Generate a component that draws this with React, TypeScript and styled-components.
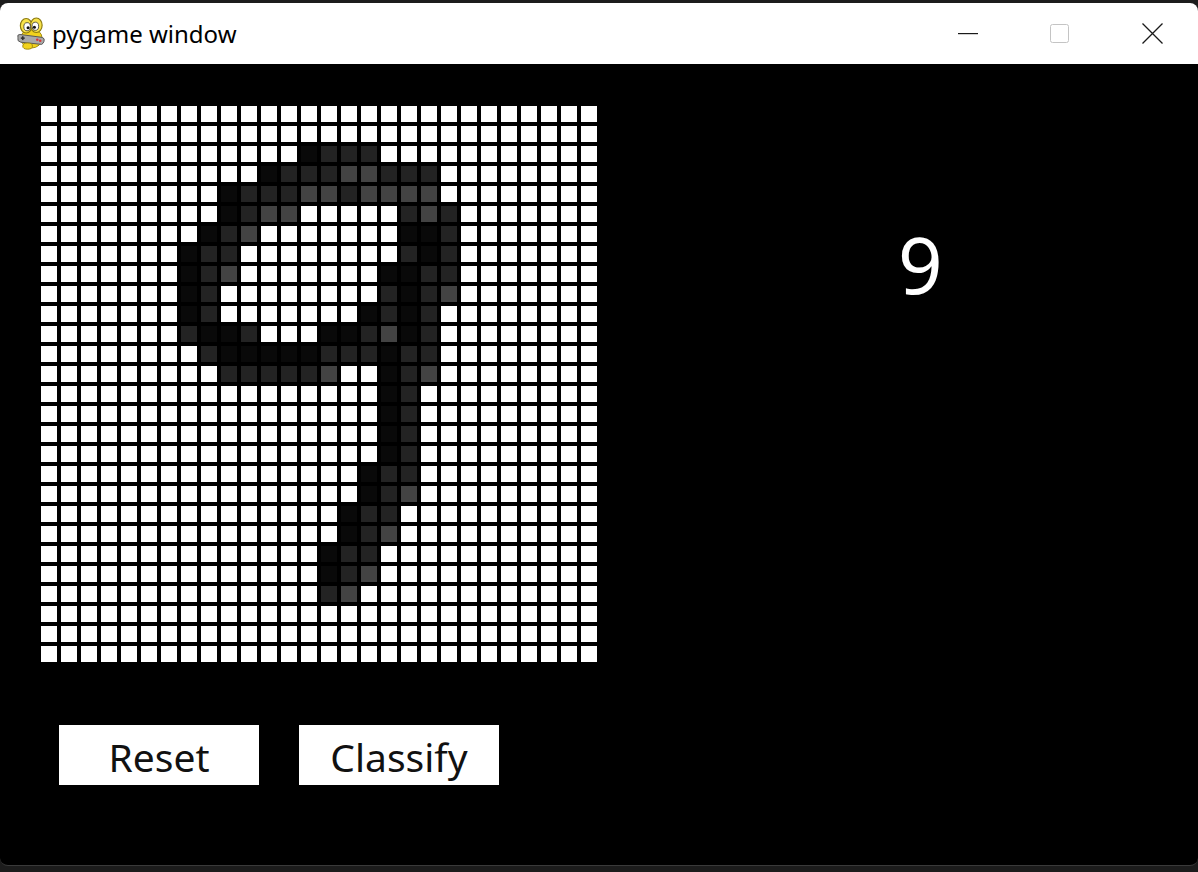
import React from "react";
import styled, { createGlobalStyle } from "styled-components";

const GlobalStyle = createGlobalStyle`
  html, body { margin: 0; padding: 0; background: #1c1c1c; }
  body { width: 1198px; height: 872px; overflow: hidden; font-family: "Noto Sans", "Open Sans", sans-serif; }
`;

const SHADES: Record<string, string> = { a: "#090909", b: "#232323", c: "#434343" };

const MARKS: Record<number, string> = {
  2: "13a 14b 15b 16b",
  3: "11a 12b 13b 14b 15c 16c 17b 18b 19b",
  4: "9a 10b 11b 12b 13c 14c 15b 16c 17c 18c 19c",
  5: "9a 10b 11c 12c 18b 19c 20b",
  6: "8a 9b 10c 18a 19a 20b",
  7: "7a 8b 9b 18b 19a 20b",
  8: "7a 8b 9c 17a 18a 19b 20b",
  9: "7a 8b 17b 18a 19b 20c",
  10: "7a 8b 16a 17b 18a 19b",
  11: "7b 8a 9a 10b 14a 15a 16b 17c 18a 19b",
  12: "8b 9a 10a 11a 12a 13a 14b 15b 16b 17a 18b 19b",
  13: "9b 10b 11b 12b 13b 14c 17a 18b 19c",
  14: "17a 18b",
  15: "17a 18b",
  16: "17a 18b",
  17: "17a 18b",
  18: "16a 17b 18b",
  19: "16a 17b 18c",
  20: "15a 16b 17b",
  21: "15a 16b 17c",
  22: "14a 15b 16b",
  23: "14a 15b 16c",
  24: "14b 15c",
};

const SIZE = 28;
const cells: string[] = [];
for (let r = 0; r < SIZE; r++) {
  const row = new Array(SIZE).fill("#ffffff");
  const spec = MARKS[r];
  if (spec) {
    spec.split(" ").forEach((t) => {
      const col = parseInt(t.slice(0, -1), 10);
      row[col] = SHADES[t.slice(-1)];
    });
  }
  cells.push(...row);
}

const Window = styled.div`
  margin-top: 3px;
  height: 862px;
  display: flex;
  flex-direction: column;
  border-radius: 8px;
  overflow: hidden;
  background: #000;
  border-bottom: 1px solid #3a3a3a;
`;

const TitleBar = styled.div`
  height: 61px;
  flex: none;
  background: #fff;
  display: flex;
  align-items: center;
  padding-left: 16px;
`;

const Title = styled.span`
  margin-left: 6px;
  font-size: 24px;
  color: #000;
  flex: 1;
`;

const Controls = styled.div`
  display: flex;
  align-items: center;
  height: 100%;
`;

const ControlButton = styled.div`
  width: 92px;
  height: 100%;
  display: flex;
  align-items: center;
  justify-content: center;
`;

const Content = styled.div`
  flex: 1;
  display: flex;
  padding: 42px 0 0 41px;
`;

const LeftColumn = styled.div`
  display: flex;
  flex-direction: column;
`;

const Board = styled.div`
  display: grid;
  grid-template-columns: repeat(28, 16px);
  grid-auto-rows: 16px;
  gap: 4px;
`;

const Cell = styled.div`
  width: 16px;
  height: 16px;
`;

const ButtonRow = styled.div`
  display: flex;
  gap: 40px;
  margin: 63px 0 0 18px;
`;

const Button = styled.div`
  width: 200px;
  height: 60px;
  background: #fff;
  color: #111;
  font-size: 39px;
  display: flex;
  align-items: center;
  justify-content: center;
  padding-top: 2px;
  box-sizing: border-box;
`;

const Prediction = styled.div`
  margin: 118px 0 0 301px;
  font-size: 78px;
  line-height: 80px;
  height: 80px;
  color: #fff;
`;

const PygameIcon = () => (
  <svg width="30" height="33" viewBox="0 0 31 34">
    <ellipse cx="16" cy="22" rx="11" ry="10" fill="#f2d21c" stroke="#a08a10" strokeWidth="1" />
    <ellipse cx="10.5" cy="9" rx="6" ry="7.5" fill="#f7e24a" stroke="#8c7a10" strokeWidth="1.2" />
    <ellipse cx="21" cy="8.5" rx="6" ry="7.5" fill="#f7e24a" stroke="#8c7a10" strokeWidth="1.2" />
    <ellipse cx="11.5" cy="10" rx="3.4" ry="4.2" fill="#fff" stroke="#333" strokeWidth="0.8" />
    <ellipse cx="20" cy="9.5" rx="3.4" ry="4.2" fill="#fff" stroke="#333" strokeWidth="0.8" />
    <circle cx="12.5" cy="11" r="1.6" fill="#111" />
    <circle cx="19" cy="10.5" r="1.6" fill="#111" />
    <path d="M2 21 Q1 18 4 18 L27 21 Q30 22 29 25 L28 27 Q27 29 24 28 L5 26 Q1 25 2 22 Z" fill="#a9a9a9" stroke="#555" strokeWidth="1" />
    <rect x="5" y="21" width="4" height="1.6" fill="#333" />
    <rect x="6.2" y="19.8" width="1.6" height="4" fill="#333" />
    <circle cx="22" cy="23.5" r="1.3" fill="#d33" />
    <circle cx="25" cy="24.5" r="1.3" fill="#d33" />
    <ellipse cx="12" cy="30" rx="5" ry="3.2" fill="#f2d21c" stroke="#a08a10" strokeWidth="1" />
  </svg>
);

export default function App() {
  return (
    <>
      <GlobalStyle />
      <Window>
        <TitleBar>
          <PygameIcon />
          <Title>pygame window</Title>
          <Controls>
            <ControlButton>
              <svg width="20" height="2" viewBox="0 0 20 2">
                <rect x="0" y="0" width="20" height="1.2" fill="#1a1a1a" />
              </svg>
            </ControlButton>
            <ControlButton>
              <svg width="20" height="20" viewBox="0 0 20 20">
                <rect x="0.5" y="0.5" width="18" height="18" rx="2" fill="none" stroke="#c4c4c4" strokeWidth="1" />
              </svg>
            </ControlButton>
            <ControlButton>
              <svg width="21" height="21" viewBox="0 0 21 21">
                <path d="M0.5 0.5 L20.5 20.5 M20.5 0.5 L0.5 20.5" stroke="#1a1a1a" strokeWidth="1.3" />
              </svg>
            </ControlButton>
          </Controls>
        </TitleBar>
        <Content>
          <LeftColumn>
            <Board>
              {cells.map((c, i) => (
                <Cell key={i} style={{ background: c }} />
              ))}
            </Board>
            <ButtonRow>
              <Button>Reset</Button>
              <Button>Classify</Button>
            </ButtonRow>
          </LeftColumn>
          <Prediction>9</Prediction>
        </Content>
      </Window>
    </>
  );
}
